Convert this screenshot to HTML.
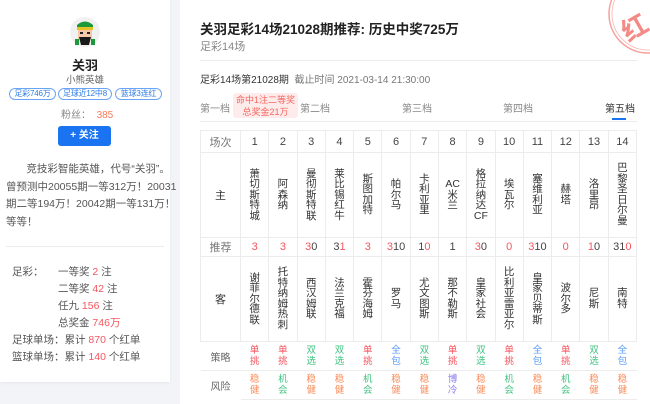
<!DOCTYPE html>
<html><head><meta charset="utf-8"><style>
*{margin:0;padding:0;box-sizing:border-box}
body{width:650px;height:404px;overflow:hidden;background:#f3f4f7;font-family:"Liberation Sans","Noto Sans CJK SC",sans-serif;position:relative;color:#333}
.a{position:absolute;white-space:nowrap}
.r{color:#f5555f}
#left{position:absolute;left:0;top:0;width:170px;height:382px;background:#fff;box-shadow:0 1px 3px rgba(0,0,0,.06)}
#main{position:absolute;left:180px;top:0;width:470px;height:404px;background:#fff}
.badge{position:absolute;top:88px;height:12px;border:1px solid #6aa5f5;border-radius:7px;font-size:8px;line-height:10px;color:#2b7be5;text-align:center;letter-spacing:-0.2px}
.desc{position:absolute;left:6px;top:161px;font-size:10.5px;line-height:17.5px;color:#555;white-space:nowrap}
.st{font-size:10.5px;color:#555}
table{position:absolute;left:200px;top:130px;width:437px;border-collapse:collapse;table-layout:fixed;font-size:11px;text-align:center}
td{border:1px solid #ececec;color:#444;padding:0;vertical-align:middle}
.v{display:inline-block;width:11px;font-size:10.5px;line-height:10.5px;white-space:normal;word-break:break-all;color:#333}
.v i{font-style:normal;white-space:nowrap;display:block;margin-left:-2px;margin-right:-2px}
.s td{border-left:none;border-right:none}
.sm{display:inline-block;width:10px;font-size:9.5px;line-height:11px;white-space:normal;word-break:break-all}
.g{color:#3fc380}.b{color:#5b9cf8}.o{color:#fa8c5a}.p{color:#8a7cf0}.rr{color:#f5555f}
</style></head><body>
<div id="left">
<svg class="a" style="left:70px;top:17px" width="30" height="30" viewBox="0 0 30 30">
<circle cx="15" cy="15" r="15" fill="#f1f1f1"/>
<path d="M7 8 Q15 1 23 8 L23 12 L7 12Z" fill="#1c9a3a"/>
<rect x="7" y="10" width="16" height="3" fill="#e6c229"/>
<rect x="8" y="13" width="14" height="9" fill="#f5c9a8"/>
<rect x="10" y="15" width="3" height="2" fill="#222"/><rect x="17" y="15" width="3" height="2" fill="#222"/>
<path d="M9 20 L21 20 L19 28 L11 28Z" fill="#1a1a1a"/>
<rect x="5" y="22" width="4" height="6" fill="#1c9a3a"/><rect x="21" y="22" width="4" height="6" fill="#1c9a3a"/>
</svg>
<div class="a" style="left:0;width:170px;text-align:center;top:55px;font-size:13px;font-weight:bold;color:#222">关羽</div>
<div class="a" style="left:0;width:170px;text-align:center;top:72px;font-size:9.5px;color:#666">小熊英雄</div>
<div class="badge" style="left:9px;width:47px">足彩746万</div>
<div class="badge" style="left:58px;width:54px">足球近12中8</div>
<div class="badge" style="left:115px;width:47px">篮球3连红</div>
<div class="a" style="left:61px;top:106px;font-size:10px;color:#888">粉丝：&nbsp;&nbsp;<span style="color:#fa7a5a">385</span></div>
<div class="a" style="left:58px;top:126px;width:53px;height:20px;background:#1a73f0;border-radius:3px;color:#fff;font-size:10px;font-weight:bold;line-height:20px;text-align:center">+ 关注</div>
<div class="desc">&nbsp;&nbsp;&nbsp;&nbsp;&nbsp;&nbsp;&nbsp;竞技彩智能英雄，代号“关羽”。<br>曾预测中20055期一等312万！20031<br>期二等194万！20042期一等131万！<br>等等！</div>
<div class="a" style="left:6px;top:246px;width:158px;height:1px;background:#ececec"></div>
<div class="a st" style="left:12px;top:264px">足彩：</div>
<div class="a st" style="left:58px;top:264px">一等奖 <span class="r">2</span> 注</div>
<div class="a st" style="left:58px;top:281px">二等奖 <span class="r">42</span> 注</div>
<div class="a st" style="left:58px;top:298px">任九 <span class="r">156</span> 注</div>
<div class="a st" style="left:58px;top:315px">总奖金 <span class="r">746万</span></div>
<div class="a st" style="left:12px;top:332px">足球单场：累计 <span class="r">870</span> 个红单</div>
<div class="a st" style="left:12px;top:349px">篮球单场：累计 <span class="r">140</span> 个红单</div>
</div>
<div id="main"></div>
<svg class="a" style="left:600px;top:0" width="50" height="60" viewBox="0 0 50 60">
<circle cx="48" cy="14" r="39" fill="none" stroke="#f5a09c" stroke-width="1.5"/>
<circle cx="48" cy="14" r="36" fill="none" stroke="#f7b5b2" stroke-width="0.8"/>
<text x="20" y="38" font-size="26" fill="#f48a85" font-weight="bold" transform="rotate(-30 32 25)" font-family="Noto Sans CJK SC">红</text>
</svg>
<div class="a" style="left:200px;top:18px;font-size:13.5px;font-weight:bold;color:#222">关羽足彩14场21028期推荐: 历史中奖725万</div>
<div class="a" style="left:200px;top:38px;font-size:11px;color:#888">足彩14场</div>
<div class="a" style="left:200px;top:60px;width:437px;height:1px;background:#ececec"></div>
<div class="a" style="left:200px;top:71px;font-size:10px;color:#333">足彩14场第21028期 <span style="color:#777">&nbsp;截止时间 2021-03-14 21:30:00</span></div>
<div class="a" style="left:200px;top:100px;font-size:10px;color:#888">第一档</div>
<div class="a" style="left:233px;top:93px;width:65px;height:25px;background:#fdeceb;border-radius:3px;color:#f5655f;font-size:9px;line-height:12px;text-align:center;padding-top:1px">命中1注二等奖<br>总奖金21万</div>
<div class="a" style="left:300px;top:100px;font-size:10px;color:#888">第二档</div>
<div class="a" style="left:402px;top:100px;font-size:10px;color:#888">第三档</div>
<div class="a" style="left:503px;top:100px;font-size:10px;color:#888">第四档</div>
<div class="a" style="left:605px;top:100px;font-size:10px;color:#333">第五档</div>
<div class="a" style="left:612px;top:118px;width:14px;height:2px;background:#1a73f0"></div>
<div class="a" style="left:200px;top:121px;width:437px;height:1px;background:#ececec"></div>
<table>
<colgroup><col style="width:40px"><col span="14"></colgroup>
<tr style="height:22px;color:#666"><td style="color:#777">场次</td><td>1</td><td>2</td><td>3</td><td>4</td><td>5</td><td>6</td><td>7</td><td>8</td><td>9</td><td>10</td><td>11</td><td>12</td><td>13</td><td>14</td></tr>
<tr style="height:85px"><td style="color:#333">主</td><td><span class="v">萧切斯特城</span></td><td><span class="v">阿森纳</span></td><td><span class="v">曼彻斯特联</span></td><td><span class="v">莱比锡红牛</span></td><td><span class="v">斯图加特</span></td><td><span class="v">帕尔马</span></td><td><span class="v">卡利亚里</span></td><td><span class="v"><i>AC</i>米兰</span></td><td><span class="v">格拉纳达<i>CF</i></span></td><td><span class="v">埃瓦尔</span></td><td><span class="v">塞维利亚</span></td><td><span class="v">赫塔</span></td><td><span class="v">洛里昂</span></td><td><span class="v">巴黎圣日尔曼</span></td></tr>
<tr style="height:19px"><td style="color:#777">推荐</td><td class="rr">3</td><td class="rr">3</td><td><span class="rr">3</span>0</td><td>3<span class="rr">1</span></td><td class="rr">3</td><td><span class="rr">3</span>10</td><td>1<span class="rr">0</span></td><td>1</td><td><span class="rr">3</span>0</td><td class="rr">0</td><td><span class="rr">3</span>10</td><td class="rr">0</td><td><span class="rr">1</span>0</td><td>31<span class="rr">0</span></td></tr>
<tr style="height:85px"><td style="color:#333">客</td><td><span class="v">谢菲尔德联</span></td><td><span class="v">托特纳姆热刺</span></td><td><span class="v">西汉姆联</span></td><td><span class="v">法兰克福</span></td><td><span class="v">霍芬海姆</span></td><td><span class="v">罗马</span></td><td><span class="v">尤文图斯</span></td><td><span class="v">那不勒斯</span></td><td><span class="v">皇家社会</span></td><td><span class="v">比利亚雷亚尔</span></td><td><span class="v">皇家贝蒂斯</span></td><td><span class="v">波尔多</span></td><td><span class="v">尼斯</span></td><td><span class="v">南特</span></td></tr>
<tr class="s" style="height:29px"><td style="color:#666;font-size:10px">策略</td><td><span class="sm rr">单挑</span></td><td><span class="sm rr">单挑</span></td><td><span class="sm g">双选</span></td><td><span class="sm g">双选</span></td><td><span class="sm rr">单挑</span></td><td><span class="sm b">全包</span></td><td><span class="sm g">双选</span></td><td><span class="sm rr">单挑</span></td><td><span class="sm g">双选</span></td><td><span class="sm rr">单挑</span></td><td><span class="sm b">全包</span></td><td><span class="sm rr">单挑</span></td><td><span class="sm g">双选</span></td><td><span class="sm b">全包</span></td></tr>
<tr class="s" style="height:29px"><td style="color:#666;font-size:10px;border-bottom:none">风险</td><td><span class="sm o">稳健</span></td><td><span class="sm g">机会</span></td><td><span class="sm o">稳健</span></td><td><span class="sm o">稳健</span></td><td><span class="sm g">机会</span></td><td><span class="sm o">稳健</span></td><td><span class="sm o">稳健</span></td><td><span class="sm p">博冷</span></td><td><span class="sm o">稳健</span></td><td><span class="sm g">机会</span></td><td><span class="sm o">稳健</span></td><td><span class="sm g">机会</span></td><td><span class="sm o">稳健</span></td><td><span class="sm o">稳健</span></td></tr>
</table>
</body></html>
